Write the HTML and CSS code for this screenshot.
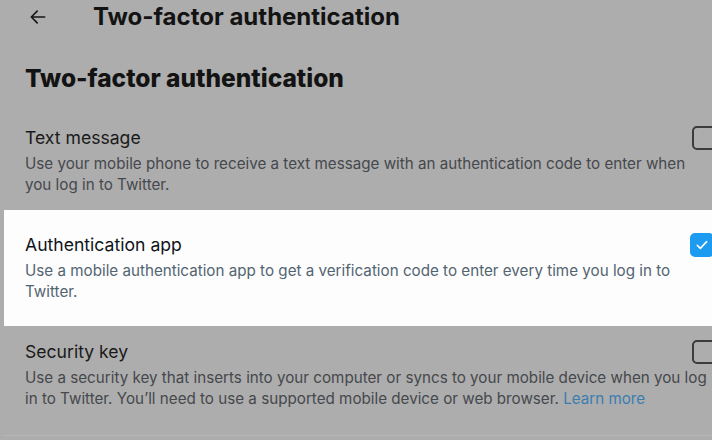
FILE: index.html
```html
<!DOCTYPE html>
<html lang="en">
<head>
    <meta charset="UTF-8">
    <meta name="viewport" content="width=device-width, initial-scale=1.0">
    <title>Two-factor authentication</title>
    <link rel="stylesheet" href="styles.css">
</head>
<body>
    <div class="page">
        <header class="topbar">
            <button class="back" aria-label="Back">
                <svg viewBox="0 0 24 24" width="20" height="20">
                    <path d="M20 12H5M11 5l-7 7 7 7" fill="none" stroke="currentColor" stroke-width="2" stroke-linecap="round" stroke-linejoin="round"/>
                </svg>
            </button>
            <h1 class="topbar-title">Two-factor authentication</h1>
        </header>

        <h2 class="page-title">Two-factor authentication</h2>

        <div class="options">
            <label class="option">
                <span class="option-name">Text message</span>
                <span class="box"></span>
                <span class="option-desc">Use your mobile phone to receive a text message with an authentication code to enter when you log in to Twitter.</span>
            </label>

            <label class="option selected">
                <span class="option-name">Authentication app</span>
                <span class="box checked">
                    <svg viewBox="0 0 24 24" width="16" height="16">
                        <path d="M5 12.5l4.5 4.5L19 7" fill="none" stroke="#fff" stroke-width="2.4" stroke-linecap="round" stroke-linejoin="round"/>
                    </svg>
                </span>
                <span class="option-desc">Use a mobile authentication app to get a verification code to enter every time you log in to Twitter.</span>
            </label>

            <label class="option last">
                <span class="option-name">Security key</span>
                <span class="box"></span>
                <span class="option-desc">Use a security key that inserts into your computer or syncs to your mobile device when you log in to Twitter. You’ll need to use a supported mobile device or web browser. <a href="#" class="link">Learn more</a></span>
            </label>
        </div>
    </div>
</body>
</html>
```

FILE: styles.css
```css
html, body {
    margin: 0;
    height: 100%;
    overflow: hidden;
}
body {
    font-family: 'Inter', 'Liberation Sans', sans-serif;
    background: #adadad;
    color: #131313;
}
.page {
    padding-left: 4px;
}
.topbar {
    display: flex;
    align-items: center;
    height: 33px;
    padding-left: 24px;
}
.back {
    display: flex;
    padding: 0;
    border: none;
    background: none;
    color: #161616;
    width: 24px;
    margin-right: 41px;
}
.topbar-title {
    margin: 0;
    font-size: 24px;
    font-weight: 700;
}
.page-title {
    margin: 0;
    padding: 30px 0 0 21px;
    line-height: 30px;
    font-size: 24.5px;
    font-weight: 800;
}
.options {
    padding-top: 19px;
}
.option {
    display: grid;
    grid-template-columns: 1fr 24px;
    align-items: center;
    padding: 13px 0 24px 21px;
    margin-right: -4px;
}
.option-name {
    font-size: 17.6px;
    line-height: 26px;
    color: #1a1a1a;
}
.option-desc {
    grid-column: 1 / -1;
    margin-top: 3px;
    padding-right: 5px;
    font-size: 15.2px;
    line-height: 20.5px;
    color: #45484c;
}
.box {
    width: 20px;
    height: 20px;
    border: 2px solid #3b3b3b;
    border-radius: 5px;
    display: flex;
    align-items: center;
    justify-content: center;
}
.box.checked {
    background: #1d9bf0;
    border-color: #1d9bf0;
    margin-left: -2px;
}
.selected {
    background: #fdfdfd;
    margin-top: -9px;
    padding-top: 22px;
}
.selected .option-name {
    color: #0f1419;
}
.selected .option-desc {
    color: #536471;
}
.last {
    padding-bottom: 26px;
    border-bottom: 1px solid #b6b6b6;
}
.link {
    color: #3c7db0;
    text-decoration: none;
}
```
